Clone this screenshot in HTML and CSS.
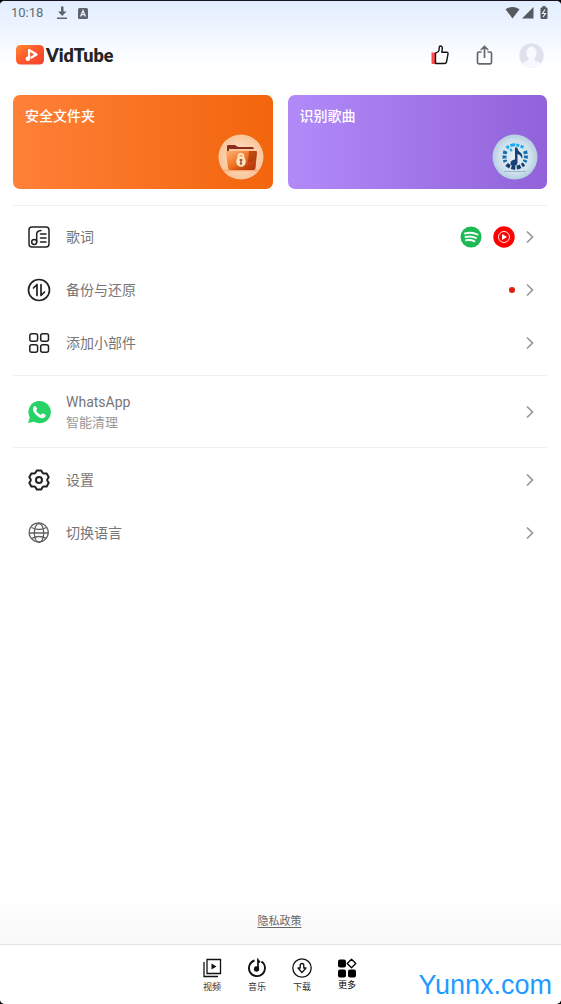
FILE: index.html
```html
<!DOCTYPE html>
<html lang="zh-CN">
<head>
<meta charset="utf-8">
<meta name="viewport" content="width=device-width, initial-scale=1">
<title>VidTube</title>
<link rel="stylesheet" href="styles.css">
</head>
<body>
<div class="screen">
  <div class="top">
    <div class="status">
      <span class="clock">10:18</span>
      <svg class="status-download" width="12" height="14" viewBox="0 0 12 14"><path d="M5 0.500h2.500v5h3L6.200 10 2 5.500h3zM1 11.500h10v1.500H1z" fill="#5f646c"/></svg>
      <svg class="status-a" width="10" height="11" viewBox="0 0 10 11"><rect width="10" height="11" rx="1.500" fill="#5f646c"/><path d="M2.500 8.500 5 2.700l2.500 5.800M3.500 6.700h3" fill="none" stroke="#e6f0fd" stroke-width="1.300"/></svg>
      <svg class="status-system" width="44" height="14" viewBox="0 0 44 14">
        <path d="M0.500 3.300Q7.500-1.300 14.500 3.300L7.500 12.500z" fill="#56595e"/>
        <path d="M17 12.500 28.500 1v11.500z" fill="#56595e"/>
        <rect x="35.500" y="1.500" width="7" height="11.500" rx="1" fill="#56595e"/><rect x="37.500" y="0" width="3" height="2" fill="#56595e"/>
        <path d="M40 3.500 37.500 7.500h3L38 11" fill="none" stroke="#e6f0fd" stroke-width="1.200"/>
      </svg>
    </div>
    <header class="header">
      <a class="brand" href="#">
        <svg width="28" height="20" viewBox="0 0 28 20">
          <defs><linearGradient id="logo" x1="0" y1="0" x2="1" y2="1"><stop offset="0" stop-color="#ff8a30"/><stop offset=".45" stop-color="#ff5a2c"/><stop offset="1" stop-color="#f4402c"/></linearGradient></defs>
          <rect width="28" height="19.500" rx="4.500" fill="url(#logo)"/>
          <path d="M13 14.500V5L20.500 9.500 14.500 13" fill="none" stroke="#fff" stroke-width="2.200" stroke-linejoin="round"/>
          <circle cx="11.800" cy="13.700" r="2.200" fill="#fff"/>
        </svg>
        <span class="brand-name">VidTube</span>
      </a>
      <button class="icon-button like" aria-label="点赞">
        <svg width="18" height="20" viewBox="0 0 18 20"><path d="M0.500 7.500h4V19H1.500Q0.500 19 0.500 18z" fill="#ff4b4b"/><path d="M4.500 8.200 7.500 6.500Q8.300 5 8.200 2.500 8.300 1 9.500 1 11.400 1 11.300 3.500L10.800 7.200H15.500Q17.300 7.200 17 9L15.500 17Q15.200 18.500 13.500 18.500H4.500z" fill="#fff" stroke="#111" stroke-width="1.400" stroke-linejoin="round"/></svg>
      </button>
      <button class="icon-button share" aria-label="分享">
        <svg width="18" height="20" viewBox="0 0 18 20" fill="none" stroke="#65686d" stroke-width="1.700"><path d="M5.500 7H2.800Q1.500 7 1.500 8.300V17.500Q1.500 18.800 2.800 18.800H14.200Q15.500 18.800 15.500 17.500V8.300Q15.500 7 14.200 7H11.500M8.500 13V1.800M4.800 5 8.500 1.500 12.200 5"/></svg>
      </button>
      <button class="icon-button avatar" aria-label="账户">
        <svg width="25" height="25" viewBox="0 0 25 25"><defs><clipPath id="round"><circle cx="12.500" cy="12.500" r="12.200"/></clipPath></defs><g clip-path="url(#round)"><path d="M0 0h25v25H0z" fill="#dfe2ed"/><ellipse cx="12.500" cy="10" rx="5.200" ry="6.500" fill="#f8f9fe"/><path d="M9.500 14h6v3.500Q23 19 24 25H1q1-6 8.500-7.500z" fill="#f8f9fe"/></g></svg>
      </button>
    </header>
  </div>

  <main class="main">
    <section class="cards">
      <a class="card card-folder" href="#">
        <span>安全文件夹</span>
        <svg class="card-art" width="46" height="46" viewBox="0 0 46 46">
          <defs>
            <radialGradient id="peach"><stop offset="0" stop-color="#ffe7cc"/><stop offset="1" stop-color="#f9c59b"/></radialGradient>
            <linearGradient id="folder" x1="0" y1="0" x2="1" y2="1"><stop offset="0" stop-color="#ffb478"/><stop offset=".5" stop-color="#ef711f"/><stop offset=".75" stop-color="#c4430d"/><stop offset="1" stop-color="#a83510"/></linearGradient>
          </defs>
          <circle cx="23" cy="23" r="22.500" fill="url(#peach)"/>
          <path d="M6 36.500h34" stroke="#f6a871" stroke-width="1.500"/>
          <path d="M9 17V12q0-1 1-1h7l3 2h14q2 0 2 2v5H9z" fill="#8a2d1e"/>
          <path d="M11 15h26v5H11z" fill="#ffc69b"/>
          <path d="M8 18.500q0-1.500 2-1.500h28q1 0 1 1L37.500 34q0 2-2 2H12q-2 0-2-2z" fill="url(#folder)"/>
          <path d="M31 17h7q1 0 1 1l-1 8-8 3z" fill="#a6380f" opacity=".7"/>
          <path d="M20.500 24v-1.500a2.500 2.500 0 0 1 5 0V24" fill="none" stroke="#ffe4c2" stroke-width="1.800"/>
          <ellipse cx="23" cy="27.500" rx="4.800" ry="5.300" fill="#ffe4c2"/><path d="M21.500 26h3M23 25v5M21.800 30h2.400" stroke="#85311a" stroke-width="1.200"/>
        </svg>
      </a>
      <a class="card card-song" href="#">
        <span>识别歌曲</span>
        <svg class="card-art" width="46" height="46" viewBox="0 0 46 46">
          <defs><radialGradient id="ice"><stop offset="0" stop-color="#e7f0f6"/><stop offset=".7" stop-color="#d0e1ed"/><stop offset="1" stop-color="#b4cee0"/></radialGradient></defs>
          <circle cx="23" cy="23" r="22.500" fill="url(#ice)"/>
          <g fill="none">
            <path d="M13.500 17Q11.500 23 13.500 28M33 17Q35 23 32.500 28" stroke="#176fae" stroke-width="4" stroke-dasharray="3 1.500"/>
            <path d="M14.500 14Q22 8 31.500 13.500M18 16.500l2-1" stroke="#20a9e8" stroke-width="3" stroke-dasharray="3 1.500 5 1"/>
            <path d="M14.500 30.500Q23 37 32 30" stroke="#153e70" stroke-width="4" stroke-dasharray="4 1.500"/>
          </g>
          <path d="M23 13.500h2q1 3.500 4 5.500 2 2 1 6-1-4-4.500-5v8q0 4-4 4-3 0-3-3t4.500-3.500z" fill="#164174"/>
          <path d="M12 37.500h22" stroke="#9bb6ca"/>
        </svg>
      </a>
    </section>

    <nav class="menu menu-tools" aria-label="功能">
      <a class="row" href="#">
        <svg class="row-icon" width="24" height="24" viewBox="0 0 24 24" fill="none" stroke="#222" stroke-width="1.500" stroke-linecap="round"><rect x="2" y="2" width="20" height="20" rx="3"/><circle cx="7.200" cy="17" r="2.500"/><path d="M9.700 17V9Q9.700 6 14 5.500M13.500 9h5.500M13.500 13h5.500M13.500 17h5.500"/></svg>
        <span class="row-label">歌词</span>
        <span class="services">
          <svg width="22" height="22" viewBox="0 0 22 22"><circle cx="11" cy="11" r="10.500" fill="#1db954"/><path d="M5 7.500q6.500-2 12.500 1M5.500 11q5.500-1.500 10.500 1M6 14.300q4.500-1 8.500 1" fill="none" stroke="#fff" stroke-width="1.900" stroke-linecap="round"/></svg>
          <svg width="22" height="22" viewBox="0 0 22 22"><circle cx="11" cy="11" r="10.700" fill="#f00"/><circle cx="11" cy="11" r="5.500" fill="none" stroke="#fff" stroke-width=".9"/><path d="m9 8 5 3-5 3z" fill="#fff"/></svg>
        </span>
        <svg class="chevron" width="10" height="14" viewBox="0 0 10 14"><path d="m2 1.500 5.500 5.500L2 12.500"/></svg>
      </a>
      <a class="row" href="#">
        <svg class="row-icon" width="24" height="24" viewBox="0 0 24 24" fill="none" stroke="#222" stroke-width="1.700" stroke-linecap="round" stroke-linejoin="round"><circle cx="12" cy="12" r="10.500"/><path d="M6.500 10 10 6.500V17.500M14 6.500V17.500L17.500 14"/></svg>
        <span class="row-label">备份与还原</span>
        <span class="dot"></span>
        <svg class="chevron" width="10" height="14" viewBox="0 0 10 14"><path d="m2 1.500 5.500 5.500L2 12.500"/></svg>
      </a>
      <a class="row" href="#">
        <svg class="row-icon" width="24" height="24" viewBox="0 0 24 24" fill="none" stroke="#222" stroke-width="1.500"><rect x="2.800" y="2.800" width="7.800" height="7.500" rx="2"/><rect x="13.700" y="2.800" width="7.800" height="7.500" rx="2"/><rect x="2.800" y="13.700" width="7.800" height="7.500" rx="2"/><rect x="13.700" y="13.700" width="7.800" height="7.500" rx="2"/></svg>
        <span class="row-label">添加小部件</span>
        <svg class="chevron" width="10" height="14" viewBox="0 0 10 14"><path d="m2 1.500 5.500 5.500L2 12.500"/></svg>
      </a>
    </nav>
    <div class="menu menu-single">
      <a class="row" href="#">
        <svg class="row-icon" width="24" height="24" viewBox="0 0 24 24"><path d="M1 23 2.800 17.500A11.200 11.200 0 1 1 7 21.800z" fill="#25d366"/><path d="M8.500 6.300Q7.700 5.800 6.900 6.500 5.200 8.300 6.200 10.800 8.800 16.300 14.300 18.200 17.200 18.800 18.600 16.300 18.900 15 18.300 14.600L15.900 13.400Q15.300 13.200 14.900 13.700L13.900 15Q10.600 13.700 9 10.500L10 9.200Q10.200 8.800 10 8.300z" fill="#fff"/></svg>
        <span class="row-label"><span class="row-title">WhatsApp</span><span class="row-note">智能清理</span></span>
        <svg class="chevron" width="10" height="14" viewBox="0 0 10 14"><path d="m2 1.500 5.500 5.500L2 12.500"/></svg>
      </a>
    </div>
    <nav class="menu" aria-label="偏好">
      <a class="row" href="#">
        <svg class="row-icon" width="24" height="24" viewBox="0 0 24 24" fill="none" stroke="#222" stroke-width="2" stroke-linejoin="round"><path d="M9.800 2.500h4.400L15.500 4.800 17 5.600 19.700 5.500 21.700 9.200 20.300 11.300V12.700L21.700 14.800 19.700 18.500 17 18.400 15.500 19.200 14.200 21.500H9.800L8.500 19.200 7 18.400 4.300 18.500 2.300 14.800 3.700 12.700V11.300L2.300 9.200 4.300 5.500 7 5.600 8.500 4.800z"/><circle cx="12" cy="12" r="3"/></svg>
        <span class="row-label">设置</span>
        <svg class="chevron" width="10" height="14" viewBox="0 0 10 14"><path d="m2 1.500 5.500 5.500L2 12.500"/></svg>
      </a>
      <a class="row" href="#">
        <svg class="row-icon" width="24" height="24" viewBox="0 0 24 24" fill="none" stroke="#606060" stroke-width="1.300"><path d="M17.500 3.900A9.500 9.500 0 1 0 20 6.800M17.500 3.900 20 6.800"/><ellipse cx="12" cy="12" rx="4.700" ry="9.500"/><path d="M2.500 12h19M4.500 6.500q7.500 4 15 0M4.500 17.500q7.500-4 15 0"/></svg>
        <span class="row-label">切换语言</span>
        <svg class="chevron" width="10" height="14" viewBox="0 0 10 14"><path d="m2 1.500 5.500 5.500L2 12.500"/></svg>
      </a>
    </nav>
  </main>

  <div class="policy"><a href="#">隐私政策</a></div>

  <footer class="tabs">
    <button class="tab">
      <svg width="20" height="20" viewBox="0 0 20 20" fill="none" stroke="#111" stroke-width="1.300"><path d="M5 1.500h13.500v14H5zM2 4v14.500h14"/><path d="m9.500 5.500 5 3-5 3z" fill="#111" stroke="none"/></svg>
      <span>视频</span>
    </button>
    <button class="tab">
      <svg width="20" height="20" viewBox="0 0 20 20"><path d="M7.500 2.500A8 8 0 1 0 14.500 3.500" fill="none" stroke="#111" stroke-width="1.900"/><circle cx="9.500" cy="11" r="2.700" fill="#111"/><path d="M11 11V2l2 2.500" fill="none" stroke="#111" stroke-width="1.700"/></svg>
      <span>音乐</span>
    </button>
    <button class="tab">
      <svg width="20" height="20" viewBox="0 0 20 20" fill="none" stroke="#111" stroke-width="1.300" stroke-linejoin="round"><circle cx="10" cy="10" r="9.200"/><path d="M8.200 10V7.500Q8.200 5.500 10 5.500T11.800 7.500V10H14L10 14.700 6 10z"/></svg>
      <span>下载</span>
    </button>
    <button class="tab tab-active">
      <svg width="20" height="20" viewBox="0 0 20 20"><g fill="#000"><rect x="1" y="1.500" width="8" height="8" rx="2"/><rect x="1" y="11.500" width="8" height="8" rx="2"/><rect x="11" y="11.500" width="8" height="8" rx="2"/></g><path d="m14.500 1.200 4.300 4.300-4.300 4.300-4.300-4.300z" fill="none" stroke="#000" stroke-width="1.300" stroke-linejoin="round"/></svg>
      <span>更多</span>
    </button>
    <span class="watermark">Yunnx.com</span>
  </footer>
</div>
</body>
</html>
```
FILE: styles.css
```css
* { box-sizing: border-box; }
body {
  margin: 0;
  background: #000;
  font-family: Roboto, "Noto Sans CJK SC", sans-serif;
}
a { color: inherit; text-decoration: none; }
svg { display: block; flex: none; }
button { border: 0; padding: 0; background: none; font: inherit; color: inherit; cursor: pointer; }

.screen {
  display: flex;
  flex-direction: column;
  min-height: 100vh;
  border-top: 1px solid #14141f;
  border-radius: 5px;
  background: #fff;
  overflow: hidden;
}

.top { background: linear-gradient(#e1edff, #fff 64px); }
.status {
  display: flex;
  align-items: center;
  height: 24px;
  padding: 0 12px 0 11px;
  color: #666b73;
}
.clock { font-size: 13px; line-height: 16px; }
.status-download { margin-left: 13px; }
.status-a { margin-left: 10px; }
.status-system { margin-left: auto; }

.header {
  display: flex;
  align-items: center;
  height: 60px;
  padding: 0 17px 0 16px;
}
.brand { display: flex; align-items: center; gap: 2px; margin-right: auto; }
.brand-name {
  font-family: Lato, sans-serif;
  font-weight: 800;
  font-size: 18px;
  line-height: 20px;
  color: #242424;
}
.icon-button { display: grid; place-items: center; }
.share { margin-left: 27px; }
.avatar { margin-left: 25px; }

.main { flex: 1; padding: 10px 14px 0 13px; }
.cards { display: grid; grid-template-columns: 1fr 1fr; gap: 15px; margin-bottom: 16px; }
.card {
  display: flex;
  flex-direction: column;
  height: 94px;
  padding: 11px 9px 8px 12px;
  border-radius: 7px;
  color: #fff;
  font-size: 14px;
  line-height: 20px;
  font-weight: 500;
}
.card-folder { background: linear-gradient(90deg, #ff8038, #f2650c); }
.card-song { background: linear-gradient(90deg, #b28af8, #9162da); }
.card-art { align-self: flex-end; margin-top: 8px; }

.menu { padding: 5px 0; border-top: 1px solid #eee; }
.menu-tools { padding: 4px 0 6px; }
.menu-single { padding: 9px 0; }
.row {
  display: flex;
  align-items: center;
  height: 53px;
  padding: 0 12px 0 14px;
  color: #767676;
  font-size: 14px;
  line-height: 20px;
}
.row-label { display: flex; flex-direction: column; flex: 1; margin-left: 15px; }
.row-title { line-height: 22px; }
.row-note { font-size: 13px; color: #999; }
.services { display: flex; gap: 11px; margin-right: 10px; }
.dot { width: 6px; height: 6px; margin-right: 10px; border-radius: 50%; background: #dc200d; }
.chevron { fill: none; stroke: #989898; stroke-width: 1.7; }

.policy {
  padding: 16px 2px 14px 0;
  background: linear-gradient(#fff, #f8f8f8);
  color: #666;
  font-size: 11px;
  line-height: 16px;
  text-align: center;
}
.policy a { text-decoration: underline; text-underline-offset: 2px; }

.tabs {
  position: relative;
  display: flex;
  justify-content: center;
  height: 60px;
  padding: 13px 2px 0 0;
  border-top: 1px solid #e2e2e2;
  background: #fff;
}
.tab {
  display: flex;
  flex-direction: column;
  align-items: center;
  gap: 2px;
  width: 45px;
  color: #333;
  font-size: 9px;
  line-height: 14px;
}
.tab-active { gap: 0; color: #000; }
.watermark {
  position: absolute;
  right: 9px;
  bottom: 3px;
  color: #1e9bff;
  font: 27px/32px "Liberation Sans", sans-serif;
}
```
